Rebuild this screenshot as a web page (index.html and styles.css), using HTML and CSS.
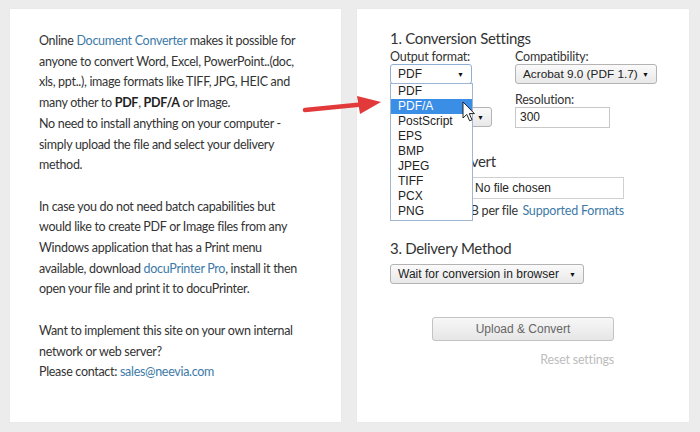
FILE: index.html
```html
<!DOCTYPE html>
<html>
<head>
<meta charset="utf-8">
<link rel="stylesheet" href="styles.css">
</head>
<body>
<div class="page">
  <div class="card info">
    <p>Online <a href="#">Document Converter</a> makes it possible for anyone to convert Word, Excel, PowerPoint..(doc, xls, ppt..), image formats like TIFF, JPG, HEIC and many other to <b>PDF</b>, <b>PDF/A</b> or Image.<br>No need to install anything on your computer - simply upload the file and select your delivery method.</p>
    <p>In case you do not need batch capabilities but would like to create PDF or Image files from any Windows application that has a Print menu available, download <a href="#">docuPrinter Pro</a>, install it then open your file and print it to docuPrinter.</p>
    <p>Want to implement this site on your own internal network or web server?<br>Please contact: <a href="#">sales@neevia.com</a></p>
  </div>
  <div class="card form">
    <h2>1. Conversion Settings</h2>
    <div class="grid">
      <div class="field">
        <div class="label">Output format:</div>
        <div class="select sel-format"><span>PDF</span><i>▼</i></div>
        <ul class="dropdown">
          <li>PDF</li>
          <li class="hl">PDF/A</li>
          <li>PostScript</li>
          <li>EPS</li>
          <li>BMP</li>
          <li>JPEG</li>
          <li>TIFF</li>
          <li>PCX</li>
          <li>PNG</li>
        </ul>
      </div>
      <div class="field">
        <div class="label">Compatibility:</div>
        <div class="select sel-compat"><span>Acrobat 9.0 (PDF 1.7)</span><i>▼</i></div>
      </div>
      <div class="field">
        <div class="label">Color images:</div>
        <div class="select sel-pages"><span>All</span><i>▼</i></div>
      </div>
      <div class="field">
        <div class="label">Resolution:</div>
        <div class="input">300</div>
      </div>
    </div>
    <h2 class="h-file">2. File to convert</h2>
    <div class="filebox"><span class="fbtn">Choose File</span><span>No file chosen</span></div>
    <div class="note"><span class="max">Max. size 10MB per file</span><a href="#">Supported Formats</a></div>
    <h2 class="h-deliv">3. Delivery Method</h2>
    <div class="select sel-deliv"><span>Wait for conversion in browser</span><i>▼</i></div>
    <div class="actions">
      <div class="button">Upload &amp; Convert</div>
      <div class="reset">Reset settings</div>
    </div>
  </div>
  <svg class="arrow" width="90" height="30" viewBox="0 0 90 30">
    <path d="M4 20 L60 14.5" stroke="#e2393b" stroke-width="4.5" stroke-linecap="round" fill="none"/>
    <path d="M56 6 L80 12 L59 24 Z" fill="#e2393b"/>
  </svg>
  <svg class="cursor" width="14" height="22" viewBox="0 0 14 22">
    <path d="M1 1 L1 17 L4.8 13.4 L7.6 19.8 L10 18.8 L7.3 12.6 L12.4 12.6 Z" fill="#fff" stroke="#222" stroke-width="1" stroke-linejoin="round"/>
  </svg>
</div>
</body>
</html>
```

FILE: styles.css
```css
html, body {
  margin: 0;
  padding: 0;
}
body {
  background: #ececec;
  width: 700px;
  height: 432px;
  overflow: hidden;
}
.page {
  position: relative;
  display: flex;
  gap: 16px;
  padding: 9px 11px 10px 10px;
  height: 413px;
}
.card {
  background: #fff;
  box-shadow: 0 0 1px rgba(0,0,0,0.08);
}
.info {
  width: 331px;
  box-sizing: border-box;
  padding: 22px 38px 0 29px;
  font-family: "Lato", "Open Sans", sans-serif;
  font-size: 12.5px;
  letter-spacing: -0.3px;
  line-height: 20.7px;
  color: #333;
}
.info p {
  margin: 0 0 20.7px 0;
}
.info a {
  color: #3d7aa8;
  text-decoration: none;
}
.info b {
  font-weight: 700;
  color: #222;
}
.form {
  width: 332px;
  box-sizing: border-box;
  padding: 19px 20px 0 33px;
  font-family: "Lato", "Open Sans", sans-serif;
  color: #333;
}
h2 {
  margin: 0;
  font-weight: 400;
  font-size: 15px;
  letter-spacing: -0.3px;
  line-height: 20px;
  color: #333;
}
.grid {
  display: grid;
  grid-template-columns: 125px 160px;
  row-gap: 9px;
  margin-top: 2px;
}
.field {
  position: relative;
}
.label {
  font-size: 12.5px;
  letter-spacing: -0.2px;
  line-height: 14px;
  color: #333;
}
.select {
  display: flex;
  align-items: center;
  justify-content: space-between;
  box-sizing: border-box;
  height: 20px;
  padding: 0 7px 0 7px;
  border: 1px solid #b3b3b3;
  border-radius: 3px;
  background: linear-gradient(#fafafa, #e8e8e8);
  font-family: "Liberation Sans", Arial, sans-serif;
  font-size: 12px;
  white-space: nowrap;
  color: #222;
}
.select i {
  font-style: normal;
  font-size: 7px;
  color: #111;
}
.sel-format {
  width: 82px;
  background: #fff;
  border-color: #8fb0d4;
}
.sel-compat {
  width: 142px;
  font-size: 11.8px;
}
.sel-pages {
  width: 102px;
}
.input {
  box-sizing: border-box;
  width: 95px;
  height: 21px;
  border: 1px solid #c8c8c8;
  padding: 2px 4px;
  font-family: "Liberation Sans", Arial, sans-serif;
  font-size: 12px;
  color: #222;
}
.dropdown {
  position: absolute;
  left: 0;
  top: 33px;
  width: 83px;
  box-sizing: border-box;
  margin: 0;
  padding: 0 0 1px 0;
  list-style: none;
  background: #fff;
  border: 1px solid #9fb6d3;
  font-family: "Liberation Sans", Arial, sans-serif;
  font-size: 12px;
  line-height: 15px;
  color: #222;
  z-index: 5;
}
.dropdown li {
  padding-left: 7px;
}
.dropdown li.hl {
  background: #3b8ee6;
  color: #fff;
}
.h-file {
  margin-top: 23px;
}
.filebox {
  display: flex;
  align-items: center;
  gap: 2px;
  box-sizing: border-box;
  width: 234px;
  height: 22px;
  margin-top: 6px;
  border: 1px solid #d0d0d0;
  padding: 0 4px;
  font-family: "Liberation Sans", Arial, sans-serif;
  font-size: 12px;
  white-space: nowrap;
  color: #222;
}
.fbtn {
  box-sizing: border-box;
  width: 78px;
  padding: 1px 6px;
  border: 1px solid #aaa;
  border-radius: 2px;
  background: #eee;
  font-size: 11px;
}
.note {
  display: flex;
  justify-content: space-between;
  width: 234px;
  margin-top: 4px;
  font-size: 12.5px;
  letter-spacing: -0.2px;
  line-height: 16px;
  white-space: nowrap;
  color: #333;
}
.note .max {
  width: 128px;
  text-align: right;
}
.note a {
  color: #3d7aa8;
  text-decoration: none;
}
.h-deliv {
  margin-top: 19px;
}
.sel-deliv {
  width: 194px;
  margin-top: 6px;
}
.actions {
  display: flex;
  flex-direction: column;
  align-items: flex-end;
  width: 182px;
  margin: 33px 0 0 42px;
}
.button {
  box-sizing: border-box;
  width: 182px;
  height: 24px;
  border: 1px solid #c3c3c3;
  border-radius: 3px;
  background: linear-gradient(#f7f7f7, #e6e6e6);
  font-family: "Liberation Sans", Arial, sans-serif;
  font-size: 12px;
  line-height: 22px;
  text-align: center;
  color: #666;
}
.reset {
  margin-top: 11px;
  font-size: 12.5px;
  letter-spacing: -0.2px;
  color: #bdbdbd;
}
.arrow {
  position: absolute;
  left: 301px;
  top: 90px;
}
.cursor {
  position: absolute;
  left: 462px;
  top: 101px;
  z-index: 6;
}
```
